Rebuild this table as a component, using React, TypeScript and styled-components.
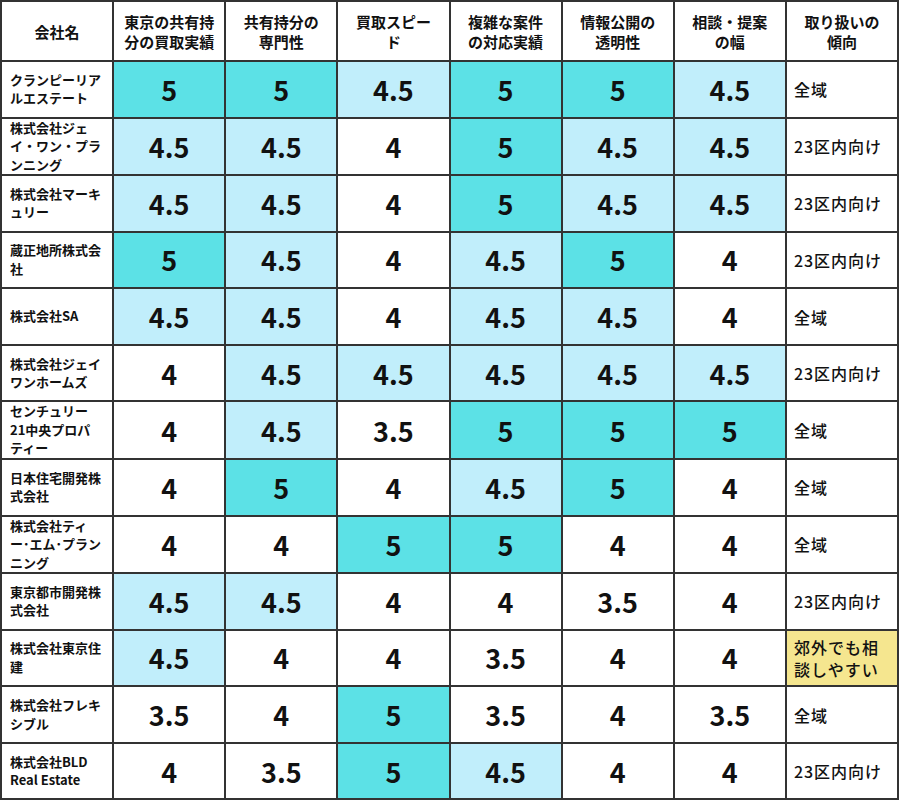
import React from "react";
import styled, { createGlobalStyle } from "styled-components";

const Global = createGlobalStyle`
  html, body { margin: 0; padding: 0; background: #fff; }
  body { font-family: "Noto Sans CJK JP", "Noto Sans", sans-serif; color: #111; }
`;

type Tone = "T" | "L" | "W";

const toneBg: Record<Tone, string> = {
  T: "#5ce1e6",
  L: "#c1eefb",
  W: "#ffffff",
};

const Table = styled.table`
  width: 899px;
  border-collapse: collapse;
  table-layout: fixed;
  font-family: "Noto Sans CJK JP", "Noto Sans", sans-serif;
`;

const HeadRow = styled.tr`
  height: 60px;
`;

const HeadCell = styled.th`
  border: 2px solid #333;
  font-size: 15px;
  font-weight: 700;
  line-height: 20px;
  text-align: center;
  vertical-align: middle;
  padding: 2px 2px 0;
  color: #111;
  white-space: nowrap;
`;

const Row = styled.tr`
  height: 56.6px;
`;

const NameCell = styled.td`
  border: 2px solid #333;
  font-size: 13px;
  font-weight: 700;
  line-height: 18.5px;
  text-align: left;
  vertical-align: middle;
  padding: 0 4px 0 8px;
  color: #111;
  white-space: nowrap;
`;

const ScoreCell = styled.td<{ $tone: Tone }>`
  border: 2px solid #333;
  background: ${(p) => toneBg[p.$tone]};
  font-size: 27px;
  font-weight: 700;
  text-align: center;
  vertical-align: middle;
  padding: 0;
  color: #111;
`;

const AreaCell = styled.td<{ $highlight?: boolean }>`
  border: 2px solid #333;
  background: ${(p) => (p.$highlight ? "#f5e68f" : "#fff")};
  font-size: 16px;
  font-weight: 500;
  letter-spacing: 1px;
  line-height: 22px;
  text-align: left;
  vertical-align: middle;
  padding: 0 4px 0 7px;
  color: #111;
`;

const Lines = ({ lines }: { lines: string[] }) => (
  <>
    {lines.map((l, i) => (
      <React.Fragment key={i}>
        {i > 0 && <br />}
        {l}
      </React.Fragment>
    ))}
  </>
);

const headers: string[][] = [
  ["会社名"],
  ["東京の共有持", "分の買取実績"],
  ["共有持分の", "専門性"],
  ["買取スピー", "ド"],
  ["複雑な案件", "の対応実績"],
  ["情報公開の", "透明性"],
  ["相談・提案", "の幅"],
  ["取り扱いの", "傾向"],
];

type RowData = {
  name: string[];
  scores: [string, Tone][];
  area: string;
  hl?: boolean;
};

const rows: RowData[] = [
  { name: ["クランピーリア", "ルエステート"], scores: [["5", "T"], ["5", "T"], ["4.5", "L"], ["5", "T"], ["5", "T"], ["4.5", "L"]], area: "全域" },
  { name: ["株式会社ジェ", "イ・ワン・プラ", "ンニング"], scores: [["4.5", "L"], ["4.5", "L"], ["4", "W"], ["5", "T"], ["4.5", "L"], ["4.5", "L"]], area: "23区内向け" },
  { name: ["株式会社マーキ", "ュリー"], scores: [["4.5", "L"], ["4.5", "L"], ["4", "W"], ["5", "T"], ["4.5", "L"], ["4.5", "L"]], area: "23区内向け" },
  { name: ["蔵正地所株式会", "社"], scores: [["5", "T"], ["4.5", "L"], ["4", "W"], ["4.5", "L"], ["5", "T"], ["4", "W"]], area: "23区内向け" },
  { name: ["株式会社SA"], scores: [["4.5", "L"], ["4.5", "L"], ["4", "W"], ["4.5", "L"], ["4.5", "L"], ["4", "W"]], area: "全域" },
  { name: ["株式会社ジェイ", "ワンホームズ"], scores: [["4", "W"], ["4.5", "L"], ["4.5", "L"], ["4.5", "L"], ["4.5", "L"], ["4.5", "L"]], area: "23区内向け" },
  { name: ["センチュリー", "21中央プロパ", "ティー"], scores: [["4", "W"], ["4.5", "L"], ["3.5", "W"], ["5", "T"], ["5", "T"], ["5", "T"]], area: "全域" },
  { name: ["日本住宅開発株", "式会社"], scores: [["4", "W"], ["5", "T"], ["4", "W"], ["4.5", "L"], ["5", "T"], ["4", "W"]], area: "全域" },
  { name: ["株式会社ティ", "ー･エム･プラン", "ニング"], scores: [["4", "W"], ["4", "W"], ["5", "T"], ["5", "T"], ["4", "W"], ["4", "W"]], area: "全域" },
  { name: ["東京都市開発株", "式会社"], scores: [["4.5", "L"], ["4.5", "L"], ["4", "W"], ["4", "W"], ["3.5", "W"], ["4", "W"]], area: "23区内向け" },
  { name: ["株式会社東京住", "建"], scores: [["4.5", "L"], ["4", "W"], ["4", "W"], ["3.5", "W"], ["4", "W"], ["4", "W"]], area: "郊外でも相談しやすい", hl: true },
  { name: ["株式会社フレキ", "シブル"], scores: [["3.5", "W"], ["4", "W"], ["5", "T"], ["3.5", "W"], ["4", "W"], ["3.5", "W"]], area: "全域" },
  { name: ["株式会社BLD", "Real Estate"], scores: [["4", "W"], ["3.5", "W"], ["5", "T"], ["4.5", "L"], ["4", "W"], ["4", "W"]], area: "23区内向け" },
];

export default function App() {
  return (
    <>
      <Global />
      <Table>
        <thead>
          <HeadRow>
            {headers.map((h, i) => (
              <HeadCell key={i}>
                <Lines lines={h} />
              </HeadCell>
            ))}
          </HeadRow>
        </thead>
        <tbody>
          {rows.map((r, ri) => (
            <Row key={ri}>
              <NameCell>
                <Lines lines={r.name} />
              </NameCell>
              {r.scores.map(([v, t], i) => (
                <ScoreCell key={i} $tone={t}>
                  {v}
                </ScoreCell>
              ))}
              <AreaCell $highlight={r.hl}>{r.area}</AreaCell>
            </Row>
          ))}
        </tbody>
      </Table>
    </>
  );
}
